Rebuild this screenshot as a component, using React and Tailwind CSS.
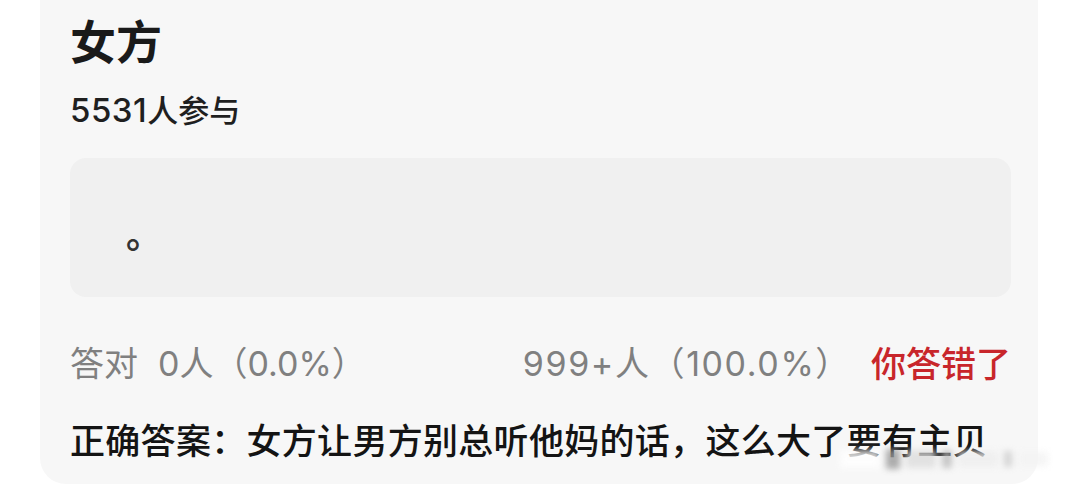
import React from "react";

const cjk = { fontFamily: 'Inter, "Noto Sans CJK SC", "Noto Sans", sans-serif' };

const App = () => {
  return (
    <div className="w-[1080px] h-[484px] bg-white overflow-hidden" style={cjk}>
      <div className="relative ml-[40px] w-[998px] bg-[#f7f7f7] rounded-b-[26px] pl-[30px] pr-[27px] pt-[19px] pb-[25px]">
        {/* Title */}
        <h1 className="text-[46px] leading-[46px] font-bold text-[#1a1a1a]">女方</h1>
        <p className="mt-[30px] text-[31px] leading-[30px] font-medium text-[#1f1f1f]">
          <span className="text-[33px] tracking-[0.5px]">5531</span>人参与
        </p>

        {/* Answer box */}
        <div className="mt-[32px] h-[139px] rounded-[16px] bg-[#f0f0f0] pl-[56px] pt-[60px]">
          <span className="text-[36px] leading-[34px] font-semibold text-[#333333]">。</span>
        </div>

        {/* Stats row */}
        <div className="mt-[50px] flex items-center justify-between text-[34px] leading-[34px] text-[#808080]">
          <div className="flex items-center gap-[20px]">
            <span>答对</span>
            <span>0人（0.0%）</span>
          </div>
          <div className="flex items-center gap-[20px]">
            <span className="tracking-[1.6px]">999+人（100.0%）</span>
            <span className="text-[35px] font-medium text-[#c8262b]">你答错了</span>
          </div>
        </div>

        {/* Correct answer */}
        <p className="mt-[43px] text-[35px] leading-[35px] tracking-[0.3px] font-medium text-[#141414] whitespace-nowrap">
          正确答案：女方让男方别总听他妈的话，这么大了要有主贝
        </p>

        {/* Watermark */}
        <div className="absolute left-[800px] top-[446px] w-[210px] h-[26px] flex items-center gap-[6px] blur-[3px] opacity-80">
          <div className="w-[40px] h-[18px] bg-white" />
          <div className="w-[14px] h-[20px] bg-[#999999]" />
          <div className="w-[30px] h-[18px] bg-[#dddddd]" />
          <div className="w-[10px] h-[18px] bg-[#bbbbbb]" />
          <div className="w-[40px] h-[16px] bg-[#eeeeee]" />
          <div className="w-[8px] h-[16px] bg-[#cccccc]" />
          <div className="w-[30px] h-[14px] bg-[#f3f3f3]" />
        </div>
      </div>
    </div>
  );
};

export default App;
